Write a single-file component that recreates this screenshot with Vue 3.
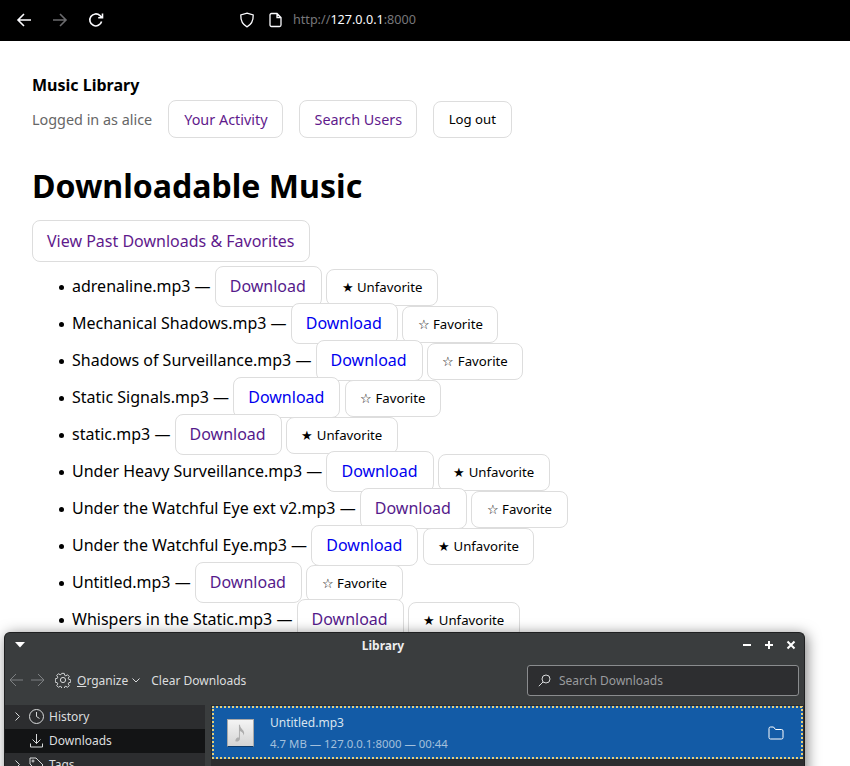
<script setup>
const songs = [
  { name: "adrenaline.mp3", visited: true, fav: true },
  { name: "Mechanical Shadows.mp3", visited: false, fav: false },
  { name: "Shadows of Surveillance.mp3", visited: false, fav: false },
  { name: "Static Signals.mp3", visited: false, fav: false },
  { name: "static.mp3", visited: true, fav: true },
  { name: "Under Heavy Surveillance.mp3", visited: false, fav: true },
  { name: "Under the Watchful Eye ext v2.mp3", visited: true, fav: false },
  { name: "Under the Watchful Eye.mp3", visited: false, fav: true },
  { name: "Untitled.mp3", visited: true, fav: false },
  { name: "Whispers in the Static.mp3", visited: true, fav: true },
];
</script>

<template>
  <div class="screen">
    <header class="urlbar">
      <svg class="ic nav-back" width="16" height="16" viewBox="0 0 16 16"><path d="M15 8H2M8 2 2 8l6 6" /></svg>
      <svg class="ic nav-fwd" width="16" height="16" viewBox="0 0 16 16"><path d="M1 8h13M8 2l6 6-6 6" /></svg>
      <svg class="ic nav-reload" width="16" height="16" viewBox="0 0 16 16"><path d="M13.6 9.500A6 6 0 1 1 12 3.600L14 5.600M14.500 1.500v4.300h-4.300" /></svg>
      <svg class="ic shield" width="16" height="16" viewBox="0 0 16 16"><path d="M8 1.200 14.200 3c.2 5.500-1.800 9.500-6.200 11.800C3.600 12.500 1.600 8.500 1.800 3z" /></svg>
      <svg class="ic page" width="14" height="16" viewBox="0 0 14 16"><path d="M2.500 1.500h5.500l4 4v7.500a1.500 1.500 0 0 1-1.500 1.500h-8A1.500 1.500 0 0 1 1 13V3a1.500 1.500 0 0 1 1.500-1.500zM8 1.500v4h4" /></svg>
      <span class="url">http://<b>127.0.0.1</b>:8000</span>
    </header>

    <main class="page-body">
      <div class="brand">Music Library</div>
      <nav class="topnav">
        <span class="who">Logged in as alice</span>
        <a class="btn nav-link">Your Activity</a>
        <a class="btn nav-link">Search Users</a>
        <button class="btn small logout">Log out</button>
      </nav>
      <h1>Downloadable Music</h1>
      <a class="btn past">View Past Downloads &amp; Favorites</a>
      <ul class="songs">
        <li v-for="song in songs" :key="song.name">
          {{ song.name }} —
          <a class="btn dl" :class="{ visited: song.visited }">Download</a>
          {{ " " }}
          <button class="btn small fav">{{ song.fav ? "★ Unfavorite" : "☆ Favorite" }}</button>
        </li>
      </ul>
    </main>

    <section class="library">
      <div class="titlebar">
        <svg class="menu-tri" width="10" height="6" viewBox="0 0 10 6"><path d="M0 0h10L5 5.500z" /></svg>
        <span class="wintitle">Library</span>
        <div class="winbtns">
          <svg width="10" height="10" viewBox="0 0 10 10"><path d="M1 5h8" /></svg>
          <svg width="10" height="10" viewBox="0 0 10 10"><path d="M1 5h8M5 1v8" /></svg>
          <svg width="10" height="10" viewBox="0 0 10 10"><path d="M1.500 1.500l7 7M8.500 1.500l-7 7" /></svg>
        </div>
      </div>

      <div class="toolbar">
        <svg class="tool dim" width="14" height="14" viewBox="0 0 14 14"><path d="M14 7H1M7 1 1 7l6 6" /></svg>
        <svg class="tool dim" width="14" height="14" viewBox="0 0 14 14"><path d="M0 7h13M7 1l6 6-6 6" /></svg>
        <svg class="tool gear" width="16" height="16" viewBox="0 0 16 16">
          <path d="M6.700 1h2.600l.4 2 1.300.6 1.800-1.100 1.800 1.800-1.100 1.800.6 1.300 2 .4v2.600l-2 .4-.6 1.300 1.100 1.800-1.800 1.800-1.800-1.100-1.300.6-.4 2H6.700l-.4-2-1.300-.6-1.800 1.100-1.800-1.800 1.100-1.800-.6-1.300-2-.4V6.700l2-.4.6-1.300-1.100-1.800 1.800-1.800 1.800 1.100 1.300-.6z" transform="translate(.4 .4) scale(.95)" />
          <circle cx="8" cy="8" r="2.600" />
        </svg>
        <span class="organize"><u>O</u>rganize</span>
        <svg class="tool chev" width="8" height="5" viewBox="0 0 8 5"><path d="M.5.500 4 4 7.500.500" /></svg>
        <span class="clear">Clear Downloads</span>
        <div class="search">
          <svg class="tool" width="13" height="13" viewBox="0 0 13 13"><circle cx="8" cy="5" r="4" /><path d="M5 8 .8 12.200" /></svg>
          <span>Search Downloads</span>
        </div>
      </div>

      <div class="panes">
        <aside class="sidebar">
          <div class="side-row">
            <svg class="tool twist" width="5" height="9" viewBox="0 0 5 9"><path d="M.5.500l4 4-4 4" /></svg>
            <svg class="tool side-ic" width="15" height="15" viewBox="0 0 15 15"><circle cx="7.500" cy="7.500" r="7" /><path d="M7.500 3v4.500l3 2" /></svg>
            <span>History</span>
          </div>
          <div class="side-row current">
            <span class="twist-gap"></span>
            <svg class="tool side-ic" width="15" height="15" viewBox="0 0 15 15"><path d="M7.500 1v9.500M3.500 6.500l4 4 4-4M1.500 10.500v3.500h12v-3.500" /></svg>
            <span>Downloads</span>
          </div>
          <div class="side-row">
            <svg class="tool twist" width="5" height="9" viewBox="0 0 5 9"><path d="M.5.500l4 4-4 4" /></svg>
            <svg class="tool side-ic" width="15" height="15" viewBox="0 0 15 15"><path d="M1 1h6l7 7-6 6-7-7z" /><circle cx="4" cy="4" r="1" /></svg>
            <span>Tags</span>
          </div>
        </aside>
        <div class="downloads">
          <div class="dl-item">
            <div class="file-icon">
              <svg width="14" height="22" viewBox="0 0 14 22"><path d="M4.500 1h1.200c.3 3 1.700 4.500 4 7 1.500 1.800 1.500 4 .3 6 .2-2.200-.8-4-4.300-5.500V18c0 2-2 3.500-4 3.500S0 20 .6 18.500c.6-1.600 2.400-2.400 3.900-2z" /></svg>
            </div>
            <div class="dl-text">
              <div class="dl-name">Untitled.mp3</div>
              <div class="dl-meta">4.7 MB — 127.0.0.1:8000 — 00:44</div>
            </div>
            <svg class="tool folder" width="16" height="14" viewBox="0 0 16 14"><path d="M1 2.500a1.500 1.500 0 0 1 1.500-1.500h3l2 2.500h6A1.500 1.500 0 0 1 15 5v6.500a1.500 1.500 0 0 1-1.500 1.500h-11A1.500 1.500 0 0 1 1 11.500z" /></svg>
          </div>
        </div>
      </div>
    </section>
  </div>
</template>

<style>
html,
body {
  margin: 0;
  overflow: hidden;
}
</style>

<style scoped>
.screen {
  position: relative;
  width: 850px;
  height: 766px;
  overflow: hidden;
  background: #fff;
  color: #000;
  font-family: "Noto Sans", sans-serif;
  font-size: 16px;
}

/* browser chrome */
.urlbar {
  position: relative;
  height: 41px;
  background: #000;
}
.ic {
  position: absolute;
  top: 12px;
  fill: none;
  stroke: #fbfbfe;
  stroke-width: 1.6;
}
.nav-back { left: 16px; }
.nav-fwd { left: 52px; stroke: #6b6b6e; }
.nav-reload { left: 88px; }
.shield { left: 239px; stroke-width: 1.3; }
.page { left: 269px; stroke-width: 1.3; }
.url {
  position: absolute;
  left: 293px;
  top: 11px;
  font-size: 12.6px;
  line-height: 18px;
  color: #77777a;
}
.url b {
  font-weight: 400;
  color: #fbfbfe;
}

/* page */
.page-body {
  padding: 32px 32px 0;
}
.brand {
  font-weight: 700;
  line-height: 24px;
}
.topnav {
  display: flex;
  align-items: center;
  margin-top: 3px;
  color: #666;
}
.btn {
  display: inline-block;
  box-sizing: border-box;
  border: 1px solid #ddd;
  border-radius: 8px;
  background: #fff;
  font-family: inherit;
}
.nav-link {
  padding: 7px 14px 7px 15px;
  font-size: 14.4px;
  line-height: 22px;
  height: 38px;
  padding-top: 8px;
  color: #5f1a8c;
}
.who {
  font-size: 14.4px;
  margin-right: 16px;
}
.nav-link + .nav-link {
  margin-left: 16px;
}
.small {
  padding: 7px 14.5px;
  font-size: 13.2px;
  line-height: 21px;
  color: #000;
}
.logout {
  margin-left: 16px;
}
h1 {
  margin: 26px 0 12px;
  font-size: 32.1px;
  line-height: 44px;
  font-weight: 700;
}
.past {
  padding: 9px 14px;
  font-size: 16px;
  line-height: 22px;
  color: #5f1a8c;
}
.songs {
  margin: 6px 0 0;
  padding: 0 0 0 40px;
  list-style: none;
}
li {
  line-height: 37px;
}
li::before {
  content: "";
  display: inline-block;
  width: 5px;
  height: 5px;
  margin: 0 8px 1px -13px;
  border-radius: 50%;
  background: #000;
  vertical-align: middle;
}
.dl {
  margin: -3px 0;
  padding: 8px 15px 8px 14px;
  font-size: 16px;
  line-height: 23px;
  color: #0000ee;
}
.dl.visited {
  color: #551a8b;
}
.fav {
  margin: -3px 0;
}

/* library window */
.library {
  position: absolute;
  left: 4px;
  top: 632px;
  width: 801px;
  height: 150px;
  box-sizing: border-box;
  border-radius: 6px 6px 0 0;
  border: 1px solid #1f2021;
  border-bottom: 0;
  background: #3a3d3e;
  color: #dcdedf;
  font-size: 12px;
  box-shadow: 2px 2px 14px rgba(0, 0, 0, 0.5);
}
.titlebar {
  position: relative;
  height: 27px;
  box-sizing: border-box;
  padding: 0 43px 2px 0;
  display: flex;
  align-items: center;
  justify-content: center;
}
.menu-tri {
  position: absolute;
  left: 10px;
  top: 9px;
  fill: #fff;
}
.wintitle {
  font-weight: 700;
  color: #eee;
}
.winbtns {
  position: absolute;
  right: 8px;
  top: 7px;
  display: flex;
  gap: 12px;
}
.winbtns svg {
  fill: none;
  stroke: #fff;
  stroke-width: 2;
}
.tool {
  fill: none;
  stroke: #d8dadb;
  stroke-width: 1;
  flex: none;
}
.dim {
  stroke: #7d8082;
}
.toolbar {
  height: 45px;
  display: flex;
  align-items: center;
  padding: 0 5px 5px 4px;
  box-sizing: border-box;
}
.toolbar .dim + .dim {
  margin-left: 8px;
}
.gear {
  margin-left: 10px;
}
.organize {
  margin-left: 6px;
}
.chev {
  margin-left: 4px;
}
.clear {
  margin-left: 11px;
}
.search {
  margin-left: auto;
  width: 272px;
  height: 31px;
  box-sizing: border-box;
  border: 1px solid #8a8c8e;
  border-radius: 3px;
  background: #2d2e30;
  display: flex;
  align-items: center;
  gap: 8px;
  padding-left: 10px;
  color: #9a9c9e;
}
.panes {
  display: flex;
  height: 80px;
}
.sidebar {
  width: 200px;
  background: #2c2d2f;
  flex: none;
}
.side-row {
  height: 24px;
  box-sizing: border-box;
  display: flex;
  align-items: center;
  padding: 0 0 2px 10px;
}
.side-ic {
  margin: 0 5px 0 9px;
}
.current {
  background: #131415;
}
.twist-gap {
  width: 5px;
}
.downloads {
  flex: 1;
  margin-left: 6px;
  background: #2c2d2f;
  padding-top: 1px;
}
.dl-item {
  height: 53px;
  margin: 0 1px;
  box-sizing: border-box;
  background-color: #135ba6;
  background-image:
    repeating-linear-gradient(90deg, #e6cf7a 0 2px, transparent 2px 4px),
    repeating-linear-gradient(90deg, #e6cf7a 0 2px, transparent 2px 4px),
    repeating-linear-gradient(0deg, #e6cf7a 0 2px, transparent 2px 4px),
    repeating-linear-gradient(0deg, #e6cf7a 0 2px, transparent 2px 4px);
  background-size: 100% 2px, 100% 2px, 2px 100%, 2px 100%;
  background-position: top, bottom, left, right;
  background-repeat: no-repeat;
  display: flex;
  align-items: center;
  padding: 0 19px 0 15px;
}
.file-icon {
  width: 27px;
  height: 28px;
  box-sizing: border-box;
  background: linear-gradient(#f4f4f4, #d4d4d4);
  border: 1px solid #a9a9a9;
  border-bottom-color: #0b3a6b;
  display: flex;
  align-items: center;
  justify-content: center;
}
.file-icon svg {
  fill: #adadad;
  height: 18px;
}
.dl-text {
  margin-left: 16px;
  flex: 1;
}
.dl-name {
  line-height: 18px;
  margin-top: 1px;
  color: #d8e4ef;
}
.dl-meta {
  font-size: 11.4px;
  line-height: 16px;
  margin-top: 4px;
  color: #a4c0dc;
}
.folder {
  stroke: #fff;
}
</style>
